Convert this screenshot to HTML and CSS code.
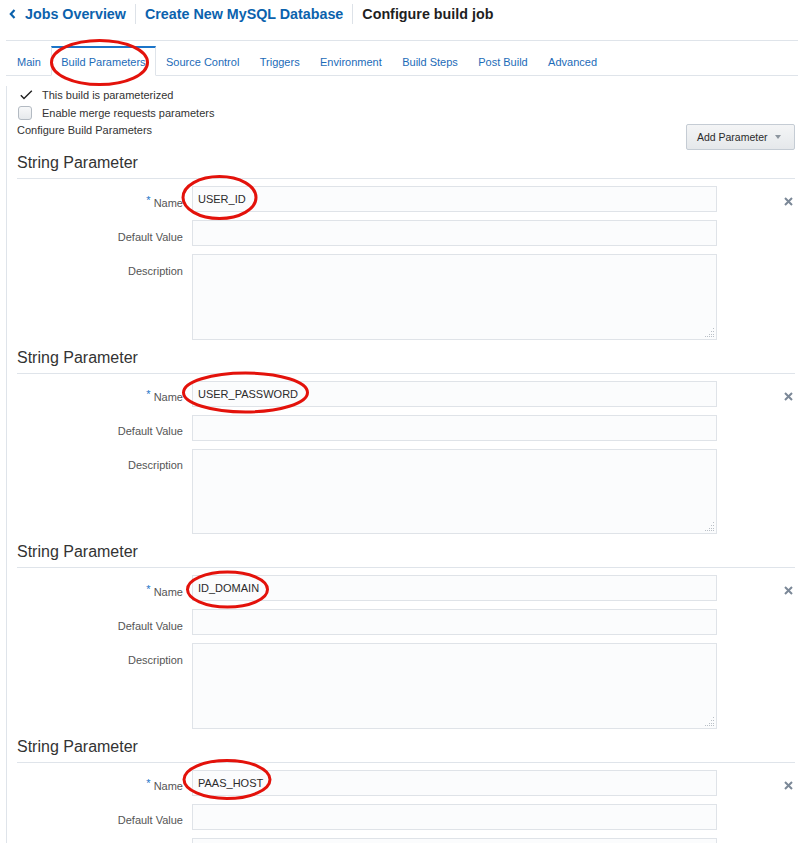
FILE: index.html
```html
<!DOCTYPE html>
<html>
<head>
<meta charset="utf-8">
<link rel="stylesheet" href="styles.css">
</head>
<body>
<div class="page">
  <header class="topbar">
    <nav class="crumbs">
      <a class="crumb crumb-back"><svg class="chev" width="7" height="10" viewBox="0 0 7 10"><path d="M5.5 1 L1.8 5 L5.5 9" fill="none" stroke="#0b62ad" stroke-width="2.2"/></svg>Jobs Overview</a>
      <a class="crumb">Create New MySQL Database</a>
      <span class="crumb crumb-current">Configure build job</span>
    </nav>
  </header>

  <div class="tabs">
    <span class="tab">Main</span>
    <span class="tab active">Build Parameters</span>
    <span class="tab">Source Control</span>
    <span class="tab">Triggers</span>
    <span class="tab">Environment</span>
    <span class="tab">Build Steps</span>
    <span class="tab">Post Build</span>
    <span class="tab">Advanced</span>
  </div>

  <main class="panel">
    <div class="opt first">
      <span class="opt-icon"><svg class="check" width="13" height="10" viewBox="0 0 13 10"><path d="M0.8 5.2 L4 8.6 L11.8 0.8" fill="none" stroke="#222" stroke-width="1.4"/></svg></span>
      <span>This build is parameterized</span>
    </div>
    <div class="opt">
      <span class="opt-icon"><span class="checkbox"></span></span>
      <span>Enable merge requests parameters</span>
    </div>
    <div class="config-row">
      <span class="config-label">Configure Build Parameters</span>
      <button class="add-btn">Add Parameter<span class="caret"></span></button>
    </div>

    <section class="section first">
      <h2 class="sec-title">String Parameter</h2>
      <div class="form">
        <label class="lbl"><span class="req">*</span> Name</label>
        <input class="field" value="USER_ID">
        <span class="close"><svg width="9" height="9" viewBox="0 0 9 9"><path d="M1 1 L8 8 M8 1 L1 8" stroke="#7b8897" stroke-width="2"/></svg></span>
        <label class="lbl">Default Value</label>
        <input class="field" value="">
        <span></span>
        <label class="lbl">Description</label>
        <div class="area"><svg class="grip" width="10" height="10" viewBox="0 0 10 10"><g fill="#b9bfc6"><rect x="8" y="0" width="1" height="1"/><rect x="6" y="3" width="1" height="1"/><rect x="8" y="3" width="1" height="1"/><rect x="4" y="6" width="1" height="1"/><rect x="6" y="6" width="1" height="1"/><rect x="8" y="6" width="1" height="1"/><rect x="0" y="8" width="1" height="1"/><rect x="2" y="8" width="1" height="1"/><rect x="4" y="8" width="1" height="1"/><rect x="6" y="8" width="1" height="1"/><rect x="8" y="8" width="1" height="1"/></g></svg></div>
        <span></span>
      </div>
    </section>

    <section class="section">
      <h2 class="sec-title">String Parameter</h2>
      <div class="form">
        <label class="lbl"><span class="req">*</span> Name</label>
        <input class="field" value="USER_PASSWORD">
        <span class="close"><svg width="9" height="9" viewBox="0 0 9 9"><path d="M1 1 L8 8 M8 1 L1 8" stroke="#7b8897" stroke-width="2"/></svg></span>
        <label class="lbl">Default Value</label>
        <input class="field" value="">
        <span></span>
        <label class="lbl">Description</label>
        <div class="area"><svg class="grip" width="10" height="10" viewBox="0 0 10 10"><g fill="#b9bfc6"><rect x="8" y="0" width="1" height="1"/><rect x="6" y="3" width="1" height="1"/><rect x="8" y="3" width="1" height="1"/><rect x="4" y="6" width="1" height="1"/><rect x="6" y="6" width="1" height="1"/><rect x="8" y="6" width="1" height="1"/><rect x="0" y="8" width="1" height="1"/><rect x="2" y="8" width="1" height="1"/><rect x="4" y="8" width="1" height="1"/><rect x="6" y="8" width="1" height="1"/><rect x="8" y="8" width="1" height="1"/></g></svg></div>
        <span></span>
      </div>
    </section>

    <section class="section">
      <h2 class="sec-title">String Parameter</h2>
      <div class="form">
        <label class="lbl"><span class="req">*</span> Name</label>
        <input class="field" value="ID_DOMAIN">
        <span class="close"><svg width="9" height="9" viewBox="0 0 9 9"><path d="M1 1 L8 8 M8 1 L1 8" stroke="#7b8897" stroke-width="2"/></svg></span>
        <label class="lbl">Default Value</label>
        <input class="field" value="">
        <span></span>
        <label class="lbl">Description</label>
        <div class="area"><svg class="grip" width="10" height="10" viewBox="0 0 10 10"><g fill="#b9bfc6"><rect x="8" y="0" width="1" height="1"/><rect x="6" y="3" width="1" height="1"/><rect x="8" y="3" width="1" height="1"/><rect x="4" y="6" width="1" height="1"/><rect x="6" y="6" width="1" height="1"/><rect x="8" y="6" width="1" height="1"/><rect x="0" y="8" width="1" height="1"/><rect x="2" y="8" width="1" height="1"/><rect x="4" y="8" width="1" height="1"/><rect x="6" y="8" width="1" height="1"/><rect x="8" y="8" width="1" height="1"/></g></svg></div>
        <span></span>
      </div>
    </section>

    <section class="section">
      <h2 class="sec-title">String Parameter</h2>
      <div class="form">
        <label class="lbl"><span class="req">*</span> Name</label>
        <input class="field" value="PAAS_HOST">
        <span class="close"><svg width="9" height="9" viewBox="0 0 9 9"><path d="M1 1 L8 8 M8 1 L1 8" stroke="#7b8897" stroke-width="2"/></svg></span>
        <label class="lbl">Default Value</label>
        <input class="field" value="">
        <span></span>
        <span class="lbl"></span>
        <div class="area"></div>
        <span></span>
      </div>
    </section>
  </main>

  <svg class="marks" width="798" height="843" viewBox="0 0 798 843">
    <g fill="none" stroke="#e3120b" stroke-width="3">
      <ellipse cx="99.5" cy="62.5" rx="48" ry="22"/>
      <ellipse cx="219.5" cy="197.5" rx="36.5" ry="21"/>
      <ellipse cx="245.5" cy="392.5" rx="62" ry="19.5"/>
      <ellipse cx="227.5" cy="589.5" rx="40" ry="17.5"/>
      <ellipse cx="227" cy="779.5" rx="43" ry="19"/>
    </g>
  </svg>
</div>
</body>
</html>
```

FILE: styles.css
```css
* { box-sizing: border-box; }
html, body { margin: 0; padding: 0; background: #fff; }
body {
  font-family: "Liberation Sans", Arial, sans-serif;
  font-size: 11px;
  color: #333;
  width: 798px;
  height: 843px;
  overflow: hidden;
}
.page { position: relative; width: 798px; height: 843px; overflow: hidden; }

/* top breadcrumb bar */
.topbar {
  margin-left: 6px;
  height: 41px;
  border-bottom: 1px solid #dfe4ea;
}
.crumbs {
  display: flex;
  align-items: center;
  height: 28px;
  padding-left: 3px;
}
.crumb {
  font-size: 14.3px;
  font-weight: bold;
  color: #0b62ad;
  text-decoration: none;
  line-height: 20px;
  padding: 0 9px;
  border-left: 1px solid #dde2e8;
  white-space: nowrap;
}
.crumb-back {
  display: flex;
  align-items: center;
  padding-left: 0;
  border-left: none;
}
.chev { margin-right: 9px; }
.crumb-current { color: #1f1f1f; }

/* tabs */
.tabs {
  display: flex;
  margin-left: 6px;
  padding-top: 5px;
  border-bottom: 1px solid #dfe4ea;
}
.tab {
  display: block;
  height: 30px;
  margin-bottom: -1px;
  padding: 1px 9.2px 0;
  border: 1px solid transparent;
  border-top-width: 2px;
  line-height: 26px;
  font-size: 11px;
  color: #1c6bb8;
  white-space: nowrap;
}
.tab:first-child { padding-left: 10px; }
.tab.active {
  border-color: #dfe4ea;
  border-top-color: #1c75c9;
  border-bottom-color: #fff;
  background: #fff;
}

/* content panel */
.panel {
  margin-left: 6px;
  border-left: 1px solid #dfe4ea;
  padding: 0 3px 0 10px;
  height: 800px;
}
.opt {
  display: flex;
  align-items: center;
  height: 18px;
  line-height: 18px;
}
.opt.first { margin-top: 10px; }
.opt-icon {
  width: 25px;
  height: 18px;
  display: flex;
  align-items: center;
}
.check { margin-left: 3px; }
.checkbox {
  display: block;
  width: 14px;
  height: 14px;
  margin-left: 1px;
  border: 1px solid #b3bac2;
  border-radius: 3px;
  background: linear-gradient(#f7f8f9, #e6e9ec);
}
.config-row {
  display: flex;
  justify-content: space-between;
  align-items: flex-start;
  height: 28px;
}
.config-label { line-height: 16px; }
.add-btn {
  margin-top: 2px;
  height: 26px;
  display: flex;
  align-items: center;
  padding: 0 13px 0 10px;
  border: 1px solid #c5ccd4;
  border-radius: 2px;
  background: linear-gradient(#f4f5f6, #e5e8eb);
  font-family: "Liberation Sans", Arial, sans-serif;
  font-size: 10.5px;
  color: #2b2b2b;
}
.caret {
  margin-left: 7.5px;
  width: 0;
  height: 0;
  border-left: 3.5px solid transparent;
  border-right: 3.5px solid transparent;
  border-top: 4px solid #8c959e;
}

/* parameter sections */
.section { margin-top: 8.1px; }
.section.first { margin-top: 3px; }
.sec-title {
  margin: 0;
  font-size: 16px;
  font-weight: normal;
  line-height: 20px;
  color: #333;
  padding-bottom: 5px;
  border-bottom: 1px solid #dfe4ea;
}
.form {
  display: grid;
  grid-template-columns: 166px 525px 1fr;
  column-gap: 9px;
  row-gap: 8px;
  margin-top: 7px;
}
.lbl {
  text-align: right;
  padding-top: 9.5px;
  line-height: 14px;
  color: #555;
  font-size: 11px;
}
.req {
  color: #1c75c9;
  position: relative;
  top: -3px;
}
.field {
  height: 26px;
  width: 525px;
  margin: 0;
  padding: 0 5px;
  border: 1px solid #dfe3e8;
  background: #fbfcfd;
  font-family: "Liberation Sans", Arial, sans-serif;
  font-size: 11px;
  color: #2b2b2b;
  outline: none;
}
.area {
  position: relative;
  height: 85.5px;
  border: 1px solid #dfe3e8;
  background: #fbfcfd;
}
.grip { position: absolute; right: 1px; bottom: 1px; }
.close {
  justify-self: end;
  margin-right: 2px;
  padding-top: 10px;
}

/* annotation overlay */
.marks {
  position: absolute;
  left: 0;
  top: 0;
  pointer-events: none;
}
```
